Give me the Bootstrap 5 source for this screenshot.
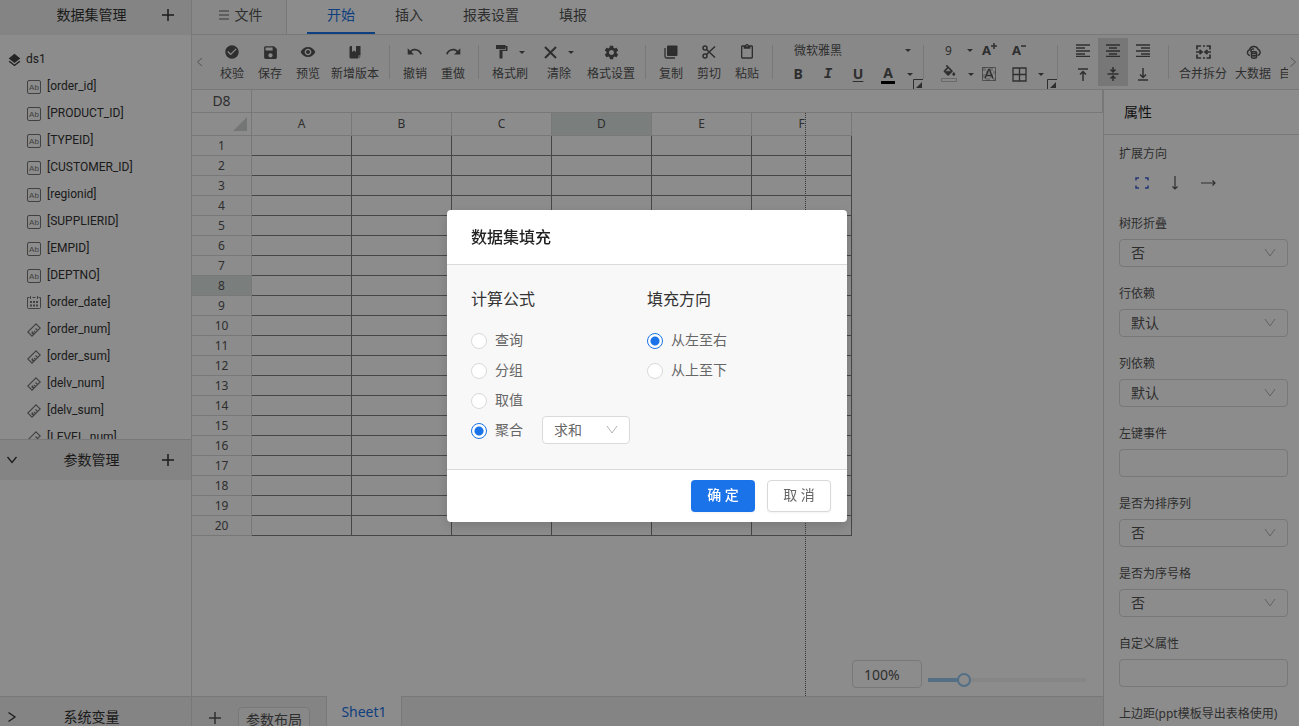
<!DOCTYPE html>
<html lang="zh-CN">
<head>
<meta charset="utf-8">
<meta name="viewport" content="width=device-width, initial-scale=1">
<title>报表设计器</title>
<link href="https://cdn.jsdelivr.net/npm/bootstrap@5.3.0/dist/css/bootstrap.min.css" rel="stylesheet">
<style>
:root { --line: #dadada; --ink: #555; --soft: #f8f8f8; --bar: #f0f0f0; --brand: #1a73e8; }
body { font: 14px/20px "Noto Sans", "Noto Sans CJK SC", sans-serif; color: var(--ink); }
button { color: inherit; font: inherit; background: none; border: 0; padding: 0; }
svg { display: block; fill: currentColor; }
.stroke { fill: none; stroke: currentColor; }

/* data set sidebar */
.side { width: 192px; border-right: 1px solid var(--line); color: #333; }
.side-head { background: var(--bar); height: 35px; padding: 0 17px 6px 7px; }
.side-head.split { height: 41px; padding-bottom: 0; border-top: 1px solid var(--line); }
.side-head.last { height: 30px; padding-top: 10px; align-items: flex-start !important; }
.side-head .tool { width: 14px; }
.side-head .blank { width: 12px; }
.pane-tree { flex: 404 1 0; }
.pane-param { flex: 216 1 0; }
.tree { font-family: Roboto, "Noto Sans", sans-serif; font-size: 12px; padding: 11px 0 0 8px; line-height: 27px; }
.tree ul { padding-left: 18px; }
.tree li > div { height: 27px; gap: 5px; }
.tree svg { color: #777; }
.tree .root svg { color: #444; }

/* tab bar and ribbon */
.tabs { height: 35px; border-bottom: 1px solid var(--line); }
.tabs .file { width: 95px; gap: 6px; background: var(--soft); border-right: 1px solid var(--line); padding: 0 0 4px 3px; }
.tabs .nav { padding-left: 20px; }
.tabs .nav-link { padding: 5px 20px 7px; color: var(--ink); border-bottom: 2px solid transparent; border-radius: 0; }
.tabs .nav-link.active { color: var(--brand); border-color: var(--brand); }
.ribbon { height: 55px; background: var(--soft); border-bottom: 1px solid var(--line); font-size: 12px; }
.ribbon .arrow { width: 21px; color: #999; padding-left: 4px; }
.ribbon .arrow.next { width: 11px; padding-left: 1px; }
.op { min-width: 38px; padding: 8px 4px 0; white-space: nowrap; align-self: flex-start; }
.op.wide { width: 50px; }
.op.mid { width: 48px; }
.op .glyph { height: 18px; gap: 11px; }
.op .glyph + span { display: block; height: 20px; margin-top: 3px; line-height: 20px; }
.rule { width: 1px; height: 34px; background: var(--line); margin: 10px 6px 0; }
.rule.tight { margin-left: 0; }
.caret { width: 6px; border: 3px solid transparent; border-top-color: currentColor; border-bottom: 0; }
.font-set { width: 144px; padding: 3px 0 0 4px; }
.fill-set { width: 127px; padding: 3px 0 0 4px; }
.align-set { padding: 3px 4px 0; }
.line-a, .line-b { height: 24px; }
.cell { width: 30px; height: 24px; }
.cell.on { background: #d9d9d9; }
.font-pick { width: 121px; margin-left: 11px; }
.font-pick select, .size-pick select { appearance: none; border: 0; background: none; color: inherit; padding: 1px 0 0; width: 100%; }
.size-pick { width: 33px; padding-left: 11px; }
.corner { right: 0; bottom: 0; }
.under { text-decoration: underline; text-underline-offset: 2px; }
.set-b { font-size: 14px; font-weight: 700; }
.ink-a { height: 17px; line-height: 17px; }

/* sheet */
.namebox { height: 23px; border-bottom: 1px solid var(--line); border-right: 1px solid var(--line); }
.namebox input { border: 0; color: inherit; background: none; min-width: 0; padding: 0; line-height: 22px; }
.namebox .addr { width: 60px; border-right: 1px solid var(--line); text-align: center; }
.grid { border-collapse: separate; border-spacing: 0; table-layout: fixed; width: 660px; font-size: 12px; line-height: 18px; }
.grid th { font-weight: 400; text-align: center; padding: 0; border: solid var(--line); border-width: 0 1px 1px 0; }
.grid thead th { height: 23px; }
.grid tbody th { height: 20px; padding-top: 1px; }
.grid td { padding: 0; border: solid #808080; border-width: 0 1px 1px 0; }
.grid .hit { background: #dfe5e3; }
.grid .all { width: 60px; }
.grid .all svg { margin: 0 4px 0 auto; color: #d4d8d6; }
.page-edge { top: 0; bottom: 0; left: 613px; border-left: 1px dotted #666; }
.zoomer { right: 17px; bottom: 8px; gap: 6px; }
.zoomer .pct { width: 70px; height: 28px; border: 1px solid var(--line); border-radius: 4px; color: inherit; padding: 0 11px; }
.zoomer input[type=range] { width: 158px; height: 14px; margin: 12px 0 0; appearance: none; background: linear-gradient(#97caf5 0 0) 0 / var(--at) 4px no-repeat, linear-gradient(#f4f4f4 0 0) 0 / 100% 4px no-repeat; }
.zoomer input[type=range]::-webkit-slider-thumb { appearance: none; width: 14px; height: 14px; border-radius: 50%; border: 2px solid #97caf5; background: #fff; }
.sheets { height: 30px; background: var(--bar); border-top: 1px solid var(--line); }
.sheets .add { width: 46px; padding: 15px 0 0 17px; align-self: flex-start; }
.sheets .layout { border: 1px solid var(--line); border-radius: 4px; background: var(--soft); width: 72px; height: 26px; margin-top: 10px; }
.sheets .sheet { width: 76px; height: 31px; margin: -1px 0 0 16px; background: #fff; border: solid var(--line); border-width: 0 1px; color: var(--brand); }

/* properties */
.props { width: 196px; border-left: 1px solid var(--line); }
.props h2 { font-size: 14px; font-weight: 400; line-height: 20px; color: #222; padding: 12px 20px; margin: 0; border-bottom: 1px solid var(--line); }
.props .fields { padding: 9px 11px 0 15px; }
.props label, .props .cap { display: block; font-size: 12px; line-height: 20px; height: 20px; white-space: nowrap; }
.props .field { height: 70px; }
.props .ways { gap: 20px; padding: 12px 0 0 16px; }
.box, .form-select.box { height: 28px; border: 1px solid var(--line); border-radius: 4px; background-color: transparent; color: var(--ink); font-size: 14px; line-height: 20px; padding: 3px 11px; margin-top: 5px;
  --bs-form-select-bg-img: url("data:image/svg+xml,%3csvg xmlns='http://www.w3.org/2000/svg' viewBox='0 0 12 12'%3e%3cpath d='M1 2l5 7 5-7' fill='none' stroke='%23b4b4b4'/%3e%3c/svg%3e");
  background-position: right 11px center; background-size: 12px 12px; }

/* dialog */
.fill-dialog { background: rgba(0,0,0,.45); padding: 6px 5px 0 0; }
.fill-dialog .modal-dialog { max-width: 400px; }
.fill-dialog .modal-content { border: 0; border-radius: 4px; box-shadow: 0 4px 12px rgba(0,0,0,.15); }
.fill-dialog .modal-header { padding: 15px 24px; border-color: var(--line); }
.fill-dialog .modal-title { font-size: 16px; line-height: 24px; font-weight: 500; color: #222; }
.fill-dialog .modal-body { background: var(--soft); padding: 22px 24px 23px; }
.fill-dialog .modal-body > fieldset { width: 176px; }
.fill-dialog legend { font-size: 16px; line-height: 24px; color: #333; margin: 0 0 15px; float: none; }
.pick { height: 30px; color: #666; }
.pick label { padding: 0 19px 0 8px; line-height: 28px; height: 30px; }
.pick .form-check-input { width: 16px; height: 16px; margin: 0; border-color: #d9d9d9; box-shadow: none; }
.pick .form-check-input:checked { background-color: #fff; border-color: var(--brand); --bs-form-check-bg-image: none; background-image: radial-gradient(circle, var(--brand) 4px, transparent 5px); }
.form-select.agg { width: 88px; margin: 0 0 2px; background-color: #fff; color: #666; }
.fill-dialog .modal-footer { padding: 10px 16px; gap: 12px; border-color: var(--line); }
.fill-dialog .btn { margin: 0; width: 64px; height: 32px; padding: 0 0 2px; font-size: 14px; line-height: 20px; border-radius: 4px; box-shadow: 0 1px 2px rgba(0,0,0,.05); }
.btn.go { background: var(--brand); color: #fff; font-weight: 500; }
.btn.stop { background: #fff; color: #666; border: 1px solid #d9d9d9; }
</style>
</head>
<body>
<svg class="d-none" aria-hidden="true">
  <symbol id="plus" viewBox="0 0 12 12"><path d="M6 0v12M0 6h12" fill="none" stroke="currentColor" stroke-width="1.500"/></symbol>
  <symbol id="ab" viewBox="0 0 14 14"><rect x=".5" y=".5" width="13" height="13" rx="1.500" fill="none" stroke="currentColor"/><text x="7" y="10" text-anchor="middle" font-size="8" font-family="Liberation Sans">Ab</text></symbol>
  <symbol id="cal" viewBox="0 0 14 14"><path d="M2.500 1.500H.5v10a1 1 0 0 0 1 1h11a1 1 0 0 0 1-1v-10h-2M3.500 0v3M10.500 0v3M5.500 1.500h3" fill="none" stroke="currentColor"/><path d="M3 5h2v2H3zM6 5h2v2H6zM9 5h2v2H9zM3 8.500h2v2H3zM6 8.500h2v2H6zM9 8.500h2v2H9z"/></symbol>
  <symbol id="ruler" viewBox="0 0 14 14"><path d="M9 .8L13.200 5 5 13.200.8 9zM6.500 11.500l-2-2M8.500 9.500L7 8M10.500 7.500l-2-2M5 8.500l2 2.500" fill="none" stroke="currentColor" stroke-width="1.100"/></symbol>
  <symbol id="layers" viewBox="0 0 24 24"><path d="M11.990 18.540l-7.370-5.730L3 14.070l9 7 9-7-1.630-1.270-7.380 5.740zM12 16l7.360-5.730L21 9l-9-7-9 7 1.630 1.270L12 16z"/></symbol>
</svg>

<div class="d-flex vh-100 overflow-hidden">
  <aside class="side d-flex flex-column flex-shrink-0">
    <div class="side-head d-flex align-items-center"><span class="tool"></span><span class="flex-fill text-center">数据集管理</span><button aria-label="新增数据集"><svg width="12" height="12"><use href="#plus"/></svg></button></div>
    <div class="pane-tree overflow-hidden">
      <ul class="tree list-unstyled mb-0">
        <li><div class="root d-flex align-items-center"><svg width="13" height="14" viewBox="2 1 20 21"><use href="#layers" width="24" height="24"/></svg>ds1</div>
          <ul class="list-unstyled">
            <li><div class="d-flex align-items-center"><svg width="16" height="14"><use href="#ab"/></svg>[order_id]</div></li>
            <li><div class="d-flex align-items-center"><svg width="16" height="14"><use href="#ab"/></svg>[PRODUCT_ID]</div></li>
            <li><div class="d-flex align-items-center"><svg width="16" height="14"><use href="#ab"/></svg>[TYPEID]</div></li>
            <li><div class="d-flex align-items-center"><svg width="16" height="14"><use href="#ab"/></svg>[CUSTOMER_ID]</div></li>
            <li><div class="d-flex align-items-center"><svg width="16" height="14"><use href="#ab"/></svg>[regionid]</div></li>
            <li><div class="d-flex align-items-center"><svg width="16" height="14"><use href="#ab"/></svg>[SUPPLIERID]</div></li>
            <li><div class="d-flex align-items-center"><svg width="16" height="14"><use href="#ab"/></svg>[EMPID]</div></li>
            <li><div class="d-flex align-items-center"><svg width="16" height="14"><use href="#ab"/></svg>[DEPTNO]</div></li>
            <li><div class="d-flex align-items-center"><svg width="16" height="14"><use href="#cal"/></svg>[order_date]</div></li>
            <li><div class="d-flex align-items-center"><svg width="16" height="14"><use href="#ruler"/></svg>[order_num]</div></li>
            <li><div class="d-flex align-items-center"><svg width="16" height="14"><use href="#ruler"/></svg>[order_sum]</div></li>
            <li><div class="d-flex align-items-center"><svg width="16" height="14"><use href="#ruler"/></svg>[delv_num]</div></li>
            <li><div class="d-flex align-items-center"><svg width="16" height="14"><use href="#ruler"/></svg>[delv_sum]</div></li>
            <li><div class="d-flex align-items-center"><svg width="16" height="14"><use href="#ruler"/></svg>[LEVEL_num]</div></li>
          </ul>
        </li>
      </ul>
    </div>
    <div class="side-head split d-flex align-items-center"><button class="tool" aria-label="收起"><svg class="stroke" width="10" height="8" stroke-width="1.300"><path d="M.5 1l4.500 5.500L9.500 1"/></svg></button><span class="flex-fill text-center">参数管理</span><button aria-label="新增参数"><svg width="12" height="12"><use href="#plus"/></svg></button></div>
    <div class="pane-param"></div>
    <div class="side-head split last d-flex align-items-center"><button class="tool" aria-label="展开"><svg class="stroke" width="10" height="20" stroke-width="1.300"><path d="M1.500 5.500L8 10l-6.500 4.500"/></svg></button><span class="flex-fill text-center">系统变量</span><span class="blank"></span></div>
  </aside>

  <div class="d-flex flex-column flex-fill overflow-hidden">
    <div class="tabs d-flex flex-shrink-0">
      <button class="file d-flex align-items-center justify-content-center"><svg width="10" height="10" viewBox="0 0 10 10" class="stroke" opacity=".6"><path d="M0 1h10M0 5h10M0 9h10" stroke-width="1.500"/></svg>文件</button>
      <nav class="nav flex-nowrap">
        <a class="nav-link active" href="#">开始</a><a class="nav-link" href="#">插入</a><a class="nav-link" href="#">报表设置</a><a class="nav-link" href="#">填报</a>
      </nav>
    </div>

    <div class="ribbon d-flex flex-shrink-0">
      <button class="arrow flex-shrink-0" aria-label="向左"><svg class="stroke" width="7" height="10"><path d="M6 1L1.500 5 6 9"/></svg></button>
      <div class="d-flex flex-fill overflow-hidden">
        <button class="op flex-shrink-0"><span class="glyph d-flex justify-content-center align-items-center"><svg width="16" height="16" viewBox="0 0 24 24"><path d="M12 2C6.480 2 2 6.480 2 12s4.480 10 10 10 10-4.480 10-10S17.520 2 12 2zm-2 15l-5-5 1.410-1.410L10 14.170l7.590-7.590L19 8l-9 9z"/></svg></span><span>校验</span></button>
        <button class="op flex-shrink-0"><span class="glyph d-flex justify-content-center align-items-center"><svg width="17" height="17" viewBox="0 0 24 24"><path d="M17 3H5c-1.110 0-2 .9-2 2v14c0 1.100.89 2 2 2h14c1.100 0 2-.9 2-2V7l-4-4zm-5 16c-1.660 0-3-1.340-3-3s1.340-3 3-3 3 1.340 3 3-1.340 3-3 3zm3-10H5V5h10v4z"/></svg></span><span>保存</span></button>
        <button class="op flex-shrink-0"><span class="glyph d-flex justify-content-center align-items-center"><svg width="16" height="16" viewBox="0 0 24 24"><path d="M12 4.500C7 4.500 2.730 7.610 1 12c1.730 4.390 6 7.500 11 7.500s9.270-3.110 11-7.500c-1.730-4.390-6-7.500-11-7.500zM12 17c-2.760 0-5-2.240-5-5s2.240-5 5-5 5 2.240 5 5-2.240 5-5 5zm0-8c-1.660 0-3 1.340-3 3s1.340 3 3 3 3-1.340 3-3-1.340-3-3-3z"/></svg></span><span>预览</span></button>
        <button class="op flex-shrink-0"><span class="glyph d-flex justify-content-center align-items-center"><svg width="12" height="13" viewBox="0 0 12 13"><path d="M1.500 0H3v6l2-1.500L7 6V0h4.500v9.500h-2v3h-8A1.500 1.500 0 0 1 .5 11V1zM10.300 10.300h1.200l-1.200 2z"/></svg></span><span>新增版本</span></button>
        <div class="rule flex-shrink-0"></div>
        <button class="op flex-shrink-0"><span class="glyph d-flex justify-content-center align-items-center"><svg width="16" height="16" viewBox="1 1 23 23"><path d="M12.500 8c-2.650 0-5.050.99-6.900 2.600L2 7v9h9l-3.620-3.620c1.390-1.160 3.160-1.880 5.120-1.880 3.540 0 6.550 2.310 7.600 5.500l2.370-.78C21.080 11.030 17.150 8 12.500 8z"/></svg></span><span>撤销</span></button>
        <button class="op flex-shrink-0"><span class="glyph d-flex justify-content-center align-items-center"><svg width="16" height="16" viewBox="0 1 23 23"><path d="M18.400 10.600C16.550 8.990 14.150 8 11.500 8c-4.650 0-8.580 3.030-9.960 7.220L3.900 16c1.050-3.190 4.050-5.500 7.600-5.500 1.950 0 3.730.72 5.120 1.880L13 16h9V7l-3.600 3.600z"/></svg></span><span>重做</span></button>
        <div class="rule flex-shrink-0"></div>
        <button class="op wide flex-shrink-0"><span class="glyph d-flex justify-content-center align-items-center"><svg width="13" height="14" viewBox="0 0 13 14"><path d="M1 0h9.500v1H12.500v5H7.500v7.500h-3V4.700H11V2.500h-.5V4H1z"/></svg><i class="caret"></i></span><span>格式刷</span></button>
        <button class="op mid flex-shrink-0"><span class="glyph d-flex justify-content-center align-items-center"><svg class="stroke" width="13" height="13" viewBox="0 0 13 13" stroke-width="2"><path d="M1 1l11 11M12 1L1 12"/></svg><i class="caret"></i></span><span>清除</span></button>
        <button class="op flex-shrink-0"><span class="glyph d-flex justify-content-center align-items-center"><svg width="17" height="17" viewBox="0 0 24 24"><path d="M19.140 12.940c.04-.3.06-.61.06-.94 0-.32-.02-.64-.07-.94l2.030-1.580c.18-.14.23-.41.12-.61l-1.920-3.320c-.12-.22-.37-.29-.59-.22l-2.390.96c-.5-.38-1.030-.7-1.620-.94l-.36-2.540c-.04-.24-.24-.41-.48-.41h-3.840c-.24 0-.43.17-.47.41l-.36 2.540c-.59.24-1.130.57-1.620.94l-2.390-.96c-.22-.08-.47 0-.59.22L2.740 8.870c-.12.21-.08.47.12.61l2.030 1.580c-.05.3-.09.63-.09.94s.02.64.07.94l-2.030 1.580c-.18.14-.23.41-.12.61l1.920 3.320c.12.22.37.29.59.22l2.390-.96c.5.38 1.030.7 1.620.94l.36 2.540c.05.24.24.41.48.41h3.840c.24 0 .44-.17.47-.41l.36-2.540c.59-.24 1.130-.56 1.620-.94l2.390.96c.22.08.47 0 .59-.22l1.920-3.320c.12-.22.07-.47-.12-.61l-2.010-1.580zM12 15.600c-1.980 0-3.600-1.620-3.600-3.600s1.620-3.600 3.600-3.600 3.600 1.620 3.600 3.600-1.620 3.600-3.600 3.600z"/></svg></span><span>格式设置</span></button>
        <div class="rule flex-shrink-0"></div>
        <button class="op flex-shrink-0"><span class="glyph d-flex justify-content-center align-items-center"><svg width="14" height="14" viewBox="0 0 14 14"><path d="M4 .5h8.500a1 1 0 0 1 1 1V10a1 1 0 0 1-1 1H4a1 1 0 0 1-1-1V1.500a1 1 0 0 1 1-1z"/><path class="stroke" d="M1 3v8.500A1.500 1.500 0 0 0 2.500 13H11" stroke-width="1.300"/></svg></span><span>复制</span></button>
        <button class="op flex-shrink-0"><span class="glyph d-flex justify-content-center align-items-center"><svg class="stroke" width="14" height="14" viewBox="0 0 14 14" stroke-width="1.500"><circle cx="3" cy="3" r="2"/><circle cx="3" cy="11" r="2"/><path d="M4.500 4.500L13 12.500M4.500 9.500L13 1.500"/></svg></span><span>剪切</span></button>
        <button class="op flex-shrink-0"><span class="glyph d-flex justify-content-center align-items-center"><svg width="16" height="16" viewBox="0 0 24 24"><path d="M19 2h-4.180C14.400.84 13.300 0 12 0c-1.300 0-2.400.84-2.820 2H5c-1.100 0-2 .9-2 2v16c0 1.100.9 2 2 2h14c1.100 0 2-.9 2-2V4c0-1.100-.9-2-2-2zm-7 0c.55 0 1 .45 1 1s-.45 1-1 1-1-.45-1-1 .45-1 1-1zm7 18H5V4h2v3h10V4h2v16z"/></svg></span><span>粘贴</span></button>
        <div class="rule flex-shrink-0"></div>

        <div class="font-set position-relative flex-shrink-0">
          <div class="line-a d-flex align-items-center"><div class="font-pick d-flex align-items-center"><select aria-label="字体"><option>微软雅黑</option></select><i class="caret flex-shrink-0 me-1"></i></div></div>
          <div class="line-b set-b d-flex align-items-center"><button class="cell" aria-label="加粗">B</button><button class="cell fst-italic" style="font-family:'Liberation Mono'">I</button><button class="cell under" aria-label="下划线">U</button><button class="cell d-flex flex-column align-items-center justify-content-center" aria-label="字体颜色"><span class="ink-a">A</span><svg width="14" height="3"><path fill="#000" d="M0 0h14v3H0z"/></svg></button><i class="caret ms-1"></i></div>
          <svg class="corner position-absolute" width="10" height="10"><path class="stroke" d="M.5 10V.5H10"/><path d="M9 3v6H3z"/></svg>
        </div>
        <div class="rule tight flex-shrink-0"></div>
        <div class="fill-set position-relative flex-shrink-0">
          <div class="line-a d-flex align-items-center"><div class="size-pick"><select aria-label="字号"><option>9</option></select></div><i class="caret"></i><button class="cell set-b" aria-label="增大字号"><svg width="30" height="24"><text x="9" y="17" font-size="13">A</text><path class="stroke" d="M21 5v6M18 8h6" stroke-width="1.500"/></svg></button><button class="cell set-b" aria-label="减小字号"><svg width="30" height="24"><text x="9" y="17" font-size="13">A</text><path class="stroke" d="M18 8h5" stroke-width="1.500"/></svg></button></div>
          <div class="line-b d-flex align-items-center"><button class="cell" aria-label="填充颜色"><svg class="mx-auto" width="18" height="18" viewBox="0 0 18 18"><g transform="translate(2 0) scale(.62)"><path d="M16.560 8.940L7.620 0 6.210 1.410l2.380 2.380-5.150 5.150c-.59.59-.59 1.540 0 2.120l5.500 5.500c.29.29.68.44 1.060.44s.77-.15 1.060-.44l5.500-5.500c.59-.58.59-1.530 0-2.120zM5.210 10L10 5.210 14.790 10H5.210zM19 11.500s-2 2.170-2 3.500c0 1.100.9 2 2 2s2-.9 2-2c0-1.330-2-3.500-2-3.500z" stroke="currentColor" stroke-width=".8"/></g><path class="stroke" d="M1.500 13.500h15v3h-15z" opacity=".35"/></svg></button><i class="caret ms-1"></i><button class="cell" aria-label="底纹"><svg class="mx-auto" width="14" height="14"><path fill="#ccc" d="M0 0h4v4H0zM8 0h3v4H8zM4 4h4v3H4zM11 4h3v3h-3zM0 7h4v4H0zM8 7h3v4H8zM4 11h4v3H4zM11 11h3v3h-3z"/><path class="stroke" d="M.5.5h13v13H.5z" opacity=".6"/><path class="stroke" stroke-width="1.300" d="M3 11.500L6.500 2.500h1L11 11.500M4.500 8.500h5"/></svg></button><button class="cell" aria-label="边框"><svg class="stroke mx-auto" width="15" height="15"><path d="M1 1h13v13H1zM7.500 1v13M1 7.500h13" stroke-width="1.300"/></svg></button><i class="caret ms-1"></i></div>
          <svg class="corner position-absolute" width="10" height="10"><path class="stroke" d="M.5 10V.5H10"/><path d="M9 3v6H3z"/></svg>
        </div>
        <div class="rule tight flex-shrink-0"></div>
        <div class="align-set flex-shrink-0">
          <div class="d-flex">
            <button class="cell" aria-label="左对齐"><svg class="stroke mx-auto" width="14" height="13" stroke-width="1.500"><path d="M0 1h14M0 4h9M0 7h14M0 10h9M0 12.500h14"/></svg></button>
            <button class="cell on" aria-label="水平居中"><svg class="stroke mx-auto" width="14" height="13" stroke-width="1.500"><path d="M0 1h14M3 4h8M0 7h14M3 10h8M0 12.500h14"/></svg></button>
            <button class="cell" aria-label="右对齐"><svg class="stroke mx-auto" width="14" height="13" stroke-width="1.500"><path d="M0 1h14M5 4h9M0 7h14M5 10h9M0 12.500h14"/></svg></button>
          </div>
          <div class="d-flex">
            <button class="cell" aria-label="顶端对齐"><svg class="stroke mx-auto" width="12" height="13" stroke-width="1.500"><path d="M1 1h10M6 13V4M3 6.500l3-3 3 3"/></svg></button>
            <button class="cell on" aria-label="垂直居中"><svg class="stroke mx-auto" width="12" height="14" stroke-width="1.500"><path d="M.5 7h11M6 0v4.500M3.500 2.500L6 5l2.500-2.500M6 14V9.500M3.500 11.500L6 9l2.500 2.500"/></svg></button>
            <button class="cell" aria-label="底端对齐"><svg class="stroke mx-auto" width="12" height="13" stroke-width="1.500"><path d="M1 12h10M6 0v9M3 6.500l3 3 3-3"/></svg></button>
          </div>
        </div>
        <div class="rule flex-shrink-0"></div>
        <button class="op flex-shrink-0"><span class="glyph d-flex justify-content-center align-items-center"><svg class="stroke" width="15" height="14" viewBox="0 0 15 14" stroke-width="1.700"><path d="M1 4.500V1h4M7 1h2M10.500 1H14v3.500M1 9.500V13h4M7 13h2M10.500 13H14V9.500M0 7h5M15 7h-5M3.500 5L6 7 3.500 9M11.500 5L9 7l2.500 2"/></svg></span><span>合并拆分</span></button>
        <button class="op flex-shrink-0"><span class="glyph d-flex justify-content-center align-items-center"><svg class="stroke" width="15" height="14" viewBox="0 0 15 14" stroke-width="1.500"><path d="M4 10.500A3 3 0 0 1 3.500 4.700 4.500 4.500 0 0 1 12 4.200a3.300 3.300 0 0 1-.5 6.300M8 4C6 3.500 4.500 5 5 7"/><ellipse cx="8" cy="7.500" rx="2.500" ry="1"/><path d="M5.500 7.500V12c0 1.500 5 1.500 5 0V7.500M5.500 10c0 1.200 5 1.200 5 0"/></svg></span><span>大数据</span></button>
        <button class="op flex-shrink-0 text-start"><span class="glyph d-flex"></span><span>自</span></button>
      </div>
      <button class="arrow next flex-shrink-0" aria-label="向右"><svg class="stroke" width="8" height="12"><path d="M1.500 1.500L6.500 6l-5 4.500"/></svg></button>
    </div>

    <div class="d-flex flex-fill overflow-hidden">
      <main class="d-flex flex-column flex-fill overflow-hidden">
        <div class="namebox d-flex flex-shrink-0"><input class="addr" aria-label="单元格" value="D8"><input class="flex-fill" aria-label="公式"></div>
        <div class="flex-fill position-relative overflow-hidden">
          <table class="grid">
            <thead><tr><th class="all"><svg width="14" height="14"><path d="M14 0v14H0z"/></svg></th><th scope="col">A</th><th scope="col">B</th><th scope="col">C</th><th scope="col" class="hit">D</th><th scope="col">E</th><th scope="col">F</th></tr></thead>
            <tbody id="rows"></tbody>
          </table>
          <div class="page-edge position-absolute"></div>
          <div class="zoomer position-absolute d-flex align-items-center"><input class="pct" aria-label="缩放比例" value="100%"><input type="range" aria-label="缩放" min="0" max="100" value="20" style="--at:20%"></div>
        </div>
        <div class="sheets d-flex flex-shrink-0">
          <button class="add" aria-label="新增工作表"><svg width="12" height="12"><use href="#plus"/></svg></button>
          <button class="layout flex-shrink-0">参数布局</button>
          <button class="sheet">Sheet1</button>
        </div>
      </main>

      <section class="props flex-shrink-0 overflow-hidden">
        <h2>属性</h2>
        <div class="fields">
          <div class="field"><span class="cap">扩展方向</span>
            <div class="ways d-flex align-items-center">
              <button aria-label="不扩展"><svg class="stroke" width="14" height="12" viewBox="0 0 14 12" stroke-width="1.500" style="color:#4262d8"><path d="M1 3.500V1h3M10 1h3v2.500M13 8.500V11h-3M4 11H1V8.500"/></svg></button>
              <button aria-label="纵向扩展"><svg class="stroke" width="12" height="14" viewBox="0 0 12 14" stroke-width="1.200"><path d="M6 0v13M3.500 10.500L6 13l2.500-2.500"/></svg></button>
              <button aria-label="横向扩展"><svg class="stroke" width="15" height="10" viewBox="0 0 15 10" stroke-width="1.200"><path d="M0 5h14M11.500 2.500L14 5l-2.500 2.500"/></svg></button>
            </div></div>
          <div class="field"><label for="f1">树形折叠</label><select id="f1" class="form-select box"><option>否</option></select></div>
          <div class="field"><label for="f2">行依赖</label><select id="f2" class="form-select box"><option>默认</option></select></div>
          <div class="field"><label for="f3">列依赖</label><select id="f3" class="form-select box"><option>默认</option></select></div>
          <div class="field"><label for="f4">左键事件</label><input id="f4" class="box w-100"></div>
          <div class="field"><label for="f5">是否为排序列</label><select id="f5" class="form-select box"><option>否</option></select></div>
          <div class="field"><label for="f6">是否为序号格</label><select id="f6" class="form-select box"><option>否</option></select></div>
          <div class="field"><label for="f7">自定义属性</label><input id="f7" class="box w-100"></div>
          <div class="field"><label for="f8">上边距(ppt模板导出表格使用)</label><input id="f8" class="box w-100"></div>
        </div>
      </section>
    </div>
  </div>
</div>

<div class="modal d-block fill-dialog" role="dialog" aria-labelledby="dlg-title">
  <div class="modal-dialog modal-dialog-centered">
    <form class="modal-content">
      <div class="modal-header"><h1 class="modal-title" id="dlg-title">数据集填充</h1></div>
      <div class="modal-body d-flex">
        <fieldset>
          <legend>计算公式</legend>
          <div class="pick d-flex align-items-center"><input class="form-check-input" type="radio" name="calc" id="c1"><label for="c1">查询</label></div>
          <div class="pick d-flex align-items-center"><input class="form-check-input" type="radio" name="calc" id="c2"><label for="c2">分组</label></div>
          <div class="pick d-flex align-items-center"><input class="form-check-input" type="radio" name="calc" id="c3"><label for="c3">取值</label></div>
          <div class="pick d-flex align-items-center"><input class="form-check-input" type="radio" name="calc" id="c4" checked><label for="c4">聚合</label><select class="form-select box agg" aria-label="聚合方式"><option>求和</option></select></div>
        </fieldset>
        <fieldset>
          <legend>填充方向</legend>
          <div class="pick d-flex align-items-center"><input class="form-check-input" type="radio" name="dir" id="d1" checked><label for="d1">从左至右</label></div>
          <div class="pick d-flex align-items-center"><input class="form-check-input" type="radio" name="dir" id="d2"><label for="d2">从上至下</label></div>
        </fieldset>
      </div>
      <div class="modal-footer"><button type="button" class="btn go">确 定</button><button type="button" class="btn stop">取 消</button></div>
    </form>
  </div>
</div>

<script>
// twenty empty rows, the eighth one holding the selection
document.getElementById('rows').innerHTML = Array.from({ length: 20 }, (_, i) =>
  `<tr><th scope="row"${i === 7 ? ' class="hit"' : ''}>${i + 1}</th>${'<td></td>'.repeat(6)}</tr>`).join('');
</script>
<script src="https://cdn.jsdelivr.net/npm/bootstrap@5.3.0/dist/js/bootstrap.bundle.min.js"></script>
</body>
</html>
